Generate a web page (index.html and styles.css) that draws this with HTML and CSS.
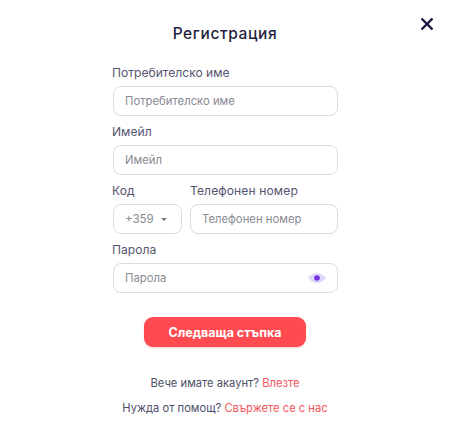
FILE: index.html
```html
<!DOCTYPE html>
<html lang="en">
<head>
    <meta charset="UTF-8">
    <meta name="viewport" content="width=device-width, initial-scale=1">
    <title>Регистрация</title>
    <link rel="stylesheet" href="styles.css">
</head>
<body>
    <div class="modal">
        <button class="close" aria-label="close">
            <svg width="14" height="14" viewBox="0 0 14 14"><path d="M1.5 1.5l11 11M12.5 1.5l-11 11" stroke="#14143c" stroke-width="2.4" fill="none"/></svg>
        </button>

        <h2>Регистрация</h2>

        <form class="form">
            <div class="form-group">
                <label>Потребителско име</label>
                <div class="field">Потребителско име</div>
            </div>

            <div class="form-group">
                <label>Имейл</label>
                <div class="field">Имейл</div>
            </div>

            <div class="phone-row">
                <div class="form-group code-group">
                    <label>Код</label>
                    <div class="field code-field">
                        <span>+359</span>
                        <span class="caret"></span>
                    </div>
                </div>
                <div class="form-group phone-group">
                    <label>Телефонен номер</label>
                    <div class="field">Телефонен номер</div>
                </div>
            </div>

            <div class="form-group">
                <label>Парола</label>
                <div class="field password-field">
                    <span>Парола</span>
                    <svg width="18" height="10" viewBox="0 0 18 10">
                        <path d="M0 5C3 1.500 6 0 9 0s6 1.500 9 5c-3 3.500-6 5-9 5S3 8.500 0 5z" fill="#dcd6fa"/>
                        <circle cx="9" cy="5" r="2.800" fill="#7332e0"/>
                    </svg>
                </div>
            </div>

            <button type="button" class="next-btn">Следваща стъпка</button>
        </form>

        <p class="note first">Вече имате акаунт? <a href="#">Влезте</a></p>
        <p class="note">Нужда от помощ? <a href="#">Свържете се с нас</a></p>
    </div>
</body>
</html>
```

FILE: styles.css
```css
* {
    box-sizing: border-box;
}
body {
    margin: 0;
    background-color: #fff;
    font-family: Inter, "Noto Sans", sans-serif;
    color: #4a4a68;
}
.modal {
    position: relative;
    width: 450px;
    height: 438px;
    padding-top: 24px;
    overflow: hidden;
}
.close {
    position: absolute;
    top: 17px;
    left: 420px;
    width: 14px;
    height: 14px;
    padding: 0;
    border: 0;
    background: none;
    line-height: 0;
}
h2 {
    margin: 0 0 21px;
    height: 20px;
    line-height: 20px;
    text-align: center;
    font-size: 15.5px;
    font-weight: 450;
    letter-spacing: 0.6px;
    color: #1f2340;
}
.form {
    width: 225px;
    margin: 0 0 0 113px;
}
.form-group {
    margin-bottom: 8px;
}
label {
    display: block;
    height: 21px;
    margin-left: -1px;
    line-height: 15px;
    font-size: 12.100px;
    color: #55556f;
}
.field {
    display: flex;
    align-items: center;
    height: 30px;
    padding: 0 11px;
    border: 1px solid #dcdcdc;
    border-radius: 8px;
    font-size: 11.300px;
    color: #8a8a93;
}
.phone-row {
    display: flex;
    gap: 8px;
}
.code-group {
    width: 69px;
}
.phone-group {
    flex: 1;
}
.phone-group label {
    margin-left: 0;
    letter-spacing: 0.1px;
}
.code-field {
    justify-content: space-between;
    font-size: 11.500px;
}
.caret {
    margin-right: 3px;
    border-left: 3px solid transparent;
    border-right: 3px solid transparent;
    border-top: 3px solid #77777f;
}
.password-field {
    justify-content: space-between;
}
.next-btn {
    display: block;
    width: 162px;
    height: 30px;
    margin: 24px 0 0 31px;
    border: 0;
    border-radius: 9px;
    background-color: #ff4b4f;
    color: #fff;
    font-family: inherit;
    font-size: 12.500px;
    font-weight: 700;
    box-shadow: 0 1px 2px rgba(255,75,79,0.3);
}
.note {
    margin: 0;
    height: 25px;
    line-height: 25px;
    text-align: center;
    font-size: 11.200px;
    color: #4e4e66;
}
.note.first {
    margin-top: 24px;
}
.note a {
    color: #f4555a;
    text-decoration: none;
}
```
